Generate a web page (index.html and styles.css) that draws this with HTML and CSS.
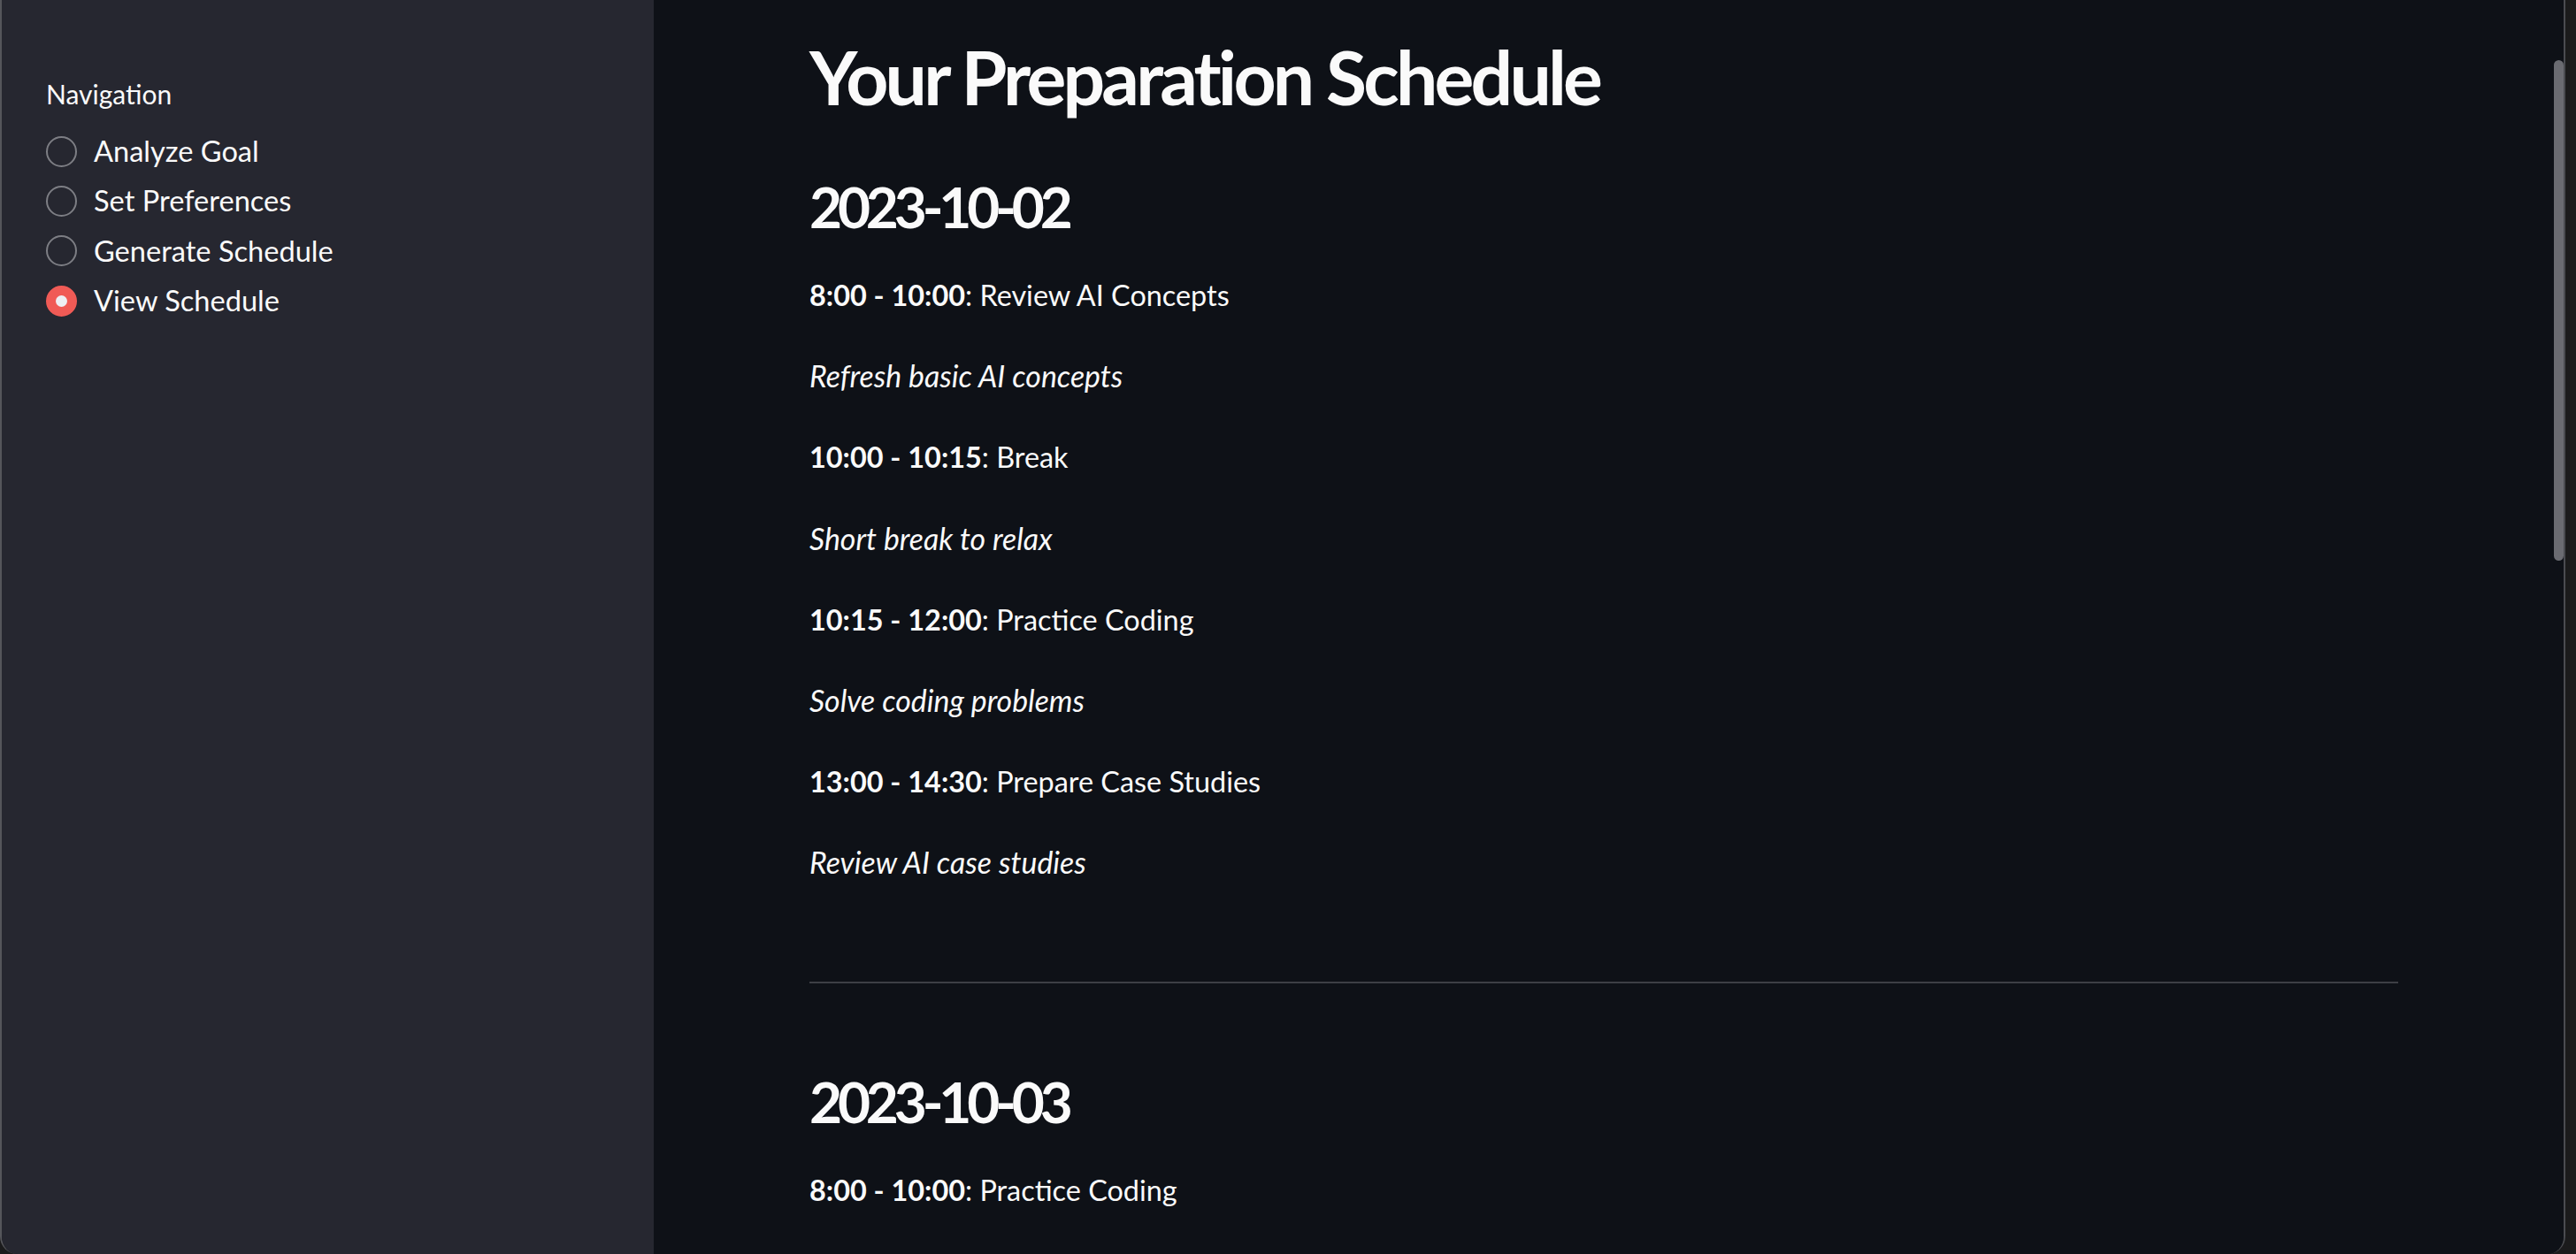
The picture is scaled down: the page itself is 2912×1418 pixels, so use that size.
FILE: index.html
```html
<!DOCTYPE html>
<html lang="en">
<head>
<meta charset="utf-8">
<title>Your Preparation Schedule</title>
<link rel="stylesheet" href="styles.css">
</head>
<body>
<div class="window">
  <aside class="sidebar">
    <div class="nav-label">Navigation</div>
    <div class="radio-group">
      <label class="radio"><span class="dot"></span><span class="radio-text">Analyze Goal</span></label>
      <label class="radio"><span class="dot"></span><span class="radio-text">Set Preferences</span></label>
      <label class="radio"><span class="dot"></span><span class="radio-text">Generate Schedule</span></label>
      <label class="radio checked"><span class="dot"></span><span class="radio-text">View Schedule</span></label>
    </div>
  </aside>
  <main class="main">
    <div class="content">
      <h1 class="title">Your Preparation Schedule</h1>
      <h2 class="day">2023-10-02</h2>
      <p class="slot"><strong>8:00 - 10:00</strong>: Review AI Concepts</p>
      <p class="slot"><em>Refresh basic AI concepts</em></p>
      <p class="slot"><strong>10:00 - 10:15</strong>: Break</p>
      <p class="slot"><em>Short break to relax</em></p>
      <p class="slot"><strong>10:15 - 12:00</strong>: Practice Coding</p>
      <p class="slot"><em>Solve coding problems</em></p>
      <p class="slot"><strong>13:00 - 14:30</strong>: Prepare Case Studies</p>
      <p class="slot"><em>Review AI case studies</em></p>
      <hr class="divider">
      <h2 class="day">2023-10-03</h2>
      <p class="slot"><strong>8:00 - 10:00</strong>: Practice Coding</p>
    </div>
    <div class="scroll-thumb"></div>
  </main>
</div>
</body>
</html>
```

FILE: styles.css
```css
html, body {
  margin: 0;
  padding: 0;
  height: 100%;
}

body {
  background: #1b1b1c;
  overflow: hidden;
  font-family: "Lato", "Noto Sans", "Liberation Sans", sans-serif;
  color: #fafafa;
}

.window {
  display: flex;
  width: 2900px;
  height: 1418px;
  border-left: 2px solid #55565b;
  border-right: 2px solid #4a4b50;
  border-radius: 0 0 20px 20px;
  overflow: hidden;
  box-sizing: border-box;
}

.sidebar {
  width: 737px;
  flex: 0 0 737px;
  background: #262730;
  padding: 85px 0 0 50px;
  box-sizing: border-box;
}

.nav-label {
  font-size: 30px;
  line-height: 42px;
  height: 42px;
  margin-bottom: 16px;
}

.radio-group {
  display: flex;
  flex-direction: column;
}

.radio {
  display: flex;
  align-items: center;
  height: 56.3px;
  gap: 19px;
}

.dot {
  width: 35px;
  height: 35px;
  border-radius: 50%;
  border: 2px solid #7d7e84;
  box-sizing: border-box;
  flex: 0 0 35px;
  display: flex;
  align-items: center;
  justify-content: center;
}

.radio.checked .dot {
  background: #f05b56;
  border-color: #f05b56;
}

.radio.checked .dot::after {
  content: "";
  width: 13px;
  height: 13px;
  border-radius: 50%;
  background: #eef0f4;
}

.radio-text {
  font-size: 32.6px;
  line-height: 42px;
}

.main {
  position: relative;
  flex: 1;
  background: #0e1117;
  overflow: hidden;
  padding: 0 187px 0 176px;
}

.content {
  display: flex;
  flex-direction: column;
  gap: 35px;
  padding-top: 29px;
}

.title {
  margin: 0 0 17px;
  font-size: 84px;
  line-height: 116px;
  font-weight: 700;
  letter-spacing: -3.8px;
}

.day {
  margin: 0;
  font-size: 64px;
  line-height: 74px;
  font-weight: 700;
  letter-spacing: -5.2px;
}

.slot {
  margin: 0;
  font-size: 32.4px;
  line-height: 56.2px;
}

.slot strong {
  font-weight: 700;
}

.slot em {
  font-size: 1.045em;
}

.divider {
  margin: 70px 0 62px;
  border: 0;
  height: 2px;
  background: #3d3f45;
}

.scroll-thumb {
  position: absolute;
  top: 68px;
  right: 0;
  width: 11px;
  height: 566px;
  border-radius: 6px;
  background: #6a6b71;
}
```
